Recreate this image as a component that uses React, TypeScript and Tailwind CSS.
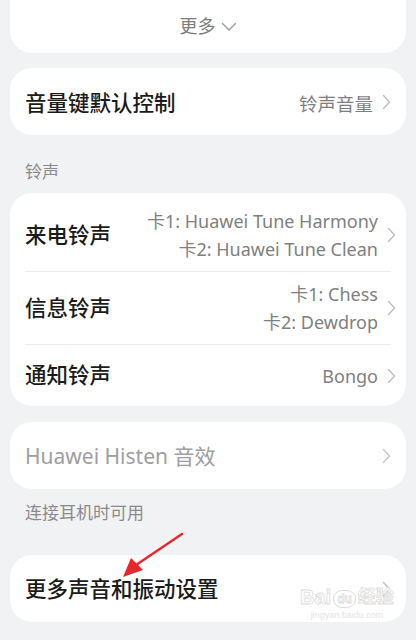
const font = { fontFamily: '"Noto Sans", "Noto Sans CJK SC", sans-serif' };

function Chevron({ light }: { light?: boolean }) {
  return (
    <svg width="9" height="16" viewBox="0 0 9 16" className="shrink-0">
      <path d="M1.5 1.5 L7.5 8 L1.5 14.5" fill="none" stroke={light ? "#c4c4c4" : "#bdbdbd"} strokeWidth="1.4" strokeLinecap="round" strokeLinejoin="round" />
    </svg>
  );
}

function Row({ title, lines, h }: { title: string; lines: string[]; h: string }) {
  return (
    <div className={`flex items-center ${h}`}>
      <span className="flex-1 text-[21.5px] font-medium text-[#1b1b1b]">{title}</span>
      <div className="flex flex-col items-end text-[18px] leading-[28px] text-[#7f7f7f]">
        {lines.map((line) => (
          <span key={line}>{line}</span>
        ))}
      </div>
      <div className="ml-[9px] mr-[-5px]">
        <Chevron />
      </div>
    </div>
  );
}

export default function App() {
  return (
    <div className="relative h-[640px] w-[416px] overflow-hidden bg-[#f1f2f4]" style={font}>
      <div className="mx-[10px] -mt-[20px] flex h-[73px] items-end justify-center rounded-[22px] bg-white pb-[13px]">
        <span className="flex items-center gap-[5px] text-[18px] text-[#7d7d7d]">
          更多
          <svg width="16" height="10" viewBox="0 0 16 10">
            <path d="M1.5 1.5 L8 8 L14.5 1.5" fill="none" stroke="#9a9a9a" strokeWidth="1.4" strokeLinecap="round" strokeLinejoin="round" />
          </svg>
        </span>
      </div>

      <div className="mx-[10px] mt-[15px] flex h-[67px] items-center rounded-[22px] bg-white pl-[15px] pr-[15px]">
        <span className="flex-1 pt-[4px] text-[21.5px] font-medium text-[#1b1b1b]">音量键默认控制</span>
        <span className="mr-[9px] pt-[4px] text-[18.5px] text-[#7f7f7f]">铃声音量</span>
        <Chevron />
      </div>

      <div className="px-[25px] pt-[26px] pb-[10px] text-[17px] leading-[22px] text-[#8a8a8a]">铃声</div>

      <div className="mx-[10px] rounded-[22px] bg-white px-[15px] pt-[6px]">
        <Row title="来电铃声" lines={["卡1: Huawei Tune Harmony", "卡2: Huawei Tune Clean"]} h="h-[72px]" />
        <div className="h-px bg-[#ebebeb]" />
        <Row title="信息铃声" lines={["卡1: Chess", "卡2: Dewdrop"]} h="h-[72px]" />
        <div className="h-px bg-[#ebebeb]" />
        <Row title="通知铃声" lines={["Bongo"]} h="h-[61px]" />
      </div>

      <div className="mx-[10px] mt-[16px] flex h-[67px] items-center rounded-[22px] bg-white pl-[15px] pr-[15px]">
        <span className="flex-1 pt-[2px] text-[21px] text-[#9e9e9e]">Huawei Histen 音效</span>
        <Chevron light />
      </div>

      <div className="px-[25px] pt-[13px] text-[17px] leading-[22px] text-[#8a8a8a]">连接耳机时可用</div>

      <div className="mx-[10px] mt-[31px] flex h-[67px] items-center rounded-[22px] bg-white pl-[15px] pr-[15px]">
        <span className="flex-1 pt-[2px] text-[21.5px] font-medium text-[#1b1b1b]">更多声音和振动设置</span>
        <Chevron />
      </div>

      {/* annotation arrow */}
      <svg className="absolute left-[118px] top-[530px]" width="70" height="50" viewBox="0 0 70 50">
        <path d="M64 4 L18 35" stroke="#e8262b" strokeWidth="2.4" strokeLinecap="round" />
        <path d="M5 47 L13 28 L25 40 Z" fill="#e8262b" />
      </svg>

      {/* watermark */}
      <div className="absolute left-[300px] top-[586px] flex flex-col items-center" style={{ fontFamily: '"Liberation Sans", "Noto Sans CJK SC", sans-serif' }}>
        <div className="flex items-end text-[20px] font-bold leading-[22px] text-white [-webkit-text-stroke:0.8px_#dcdcdc]">
          <span>Bai</span>
          <span className="mx-[2px] rounded-full border border-[#dcdcdc] px-[3px] text-[12px] leading-[16px]">du</span>
          <span className="text-[18px]">经验</span>
        </div>
        <span className="mt-[2px] text-[9px] leading-[10px] text-[#e3e3e3]">jingyan.baidu.com</span>
      </div>
    </div>
  );
}
